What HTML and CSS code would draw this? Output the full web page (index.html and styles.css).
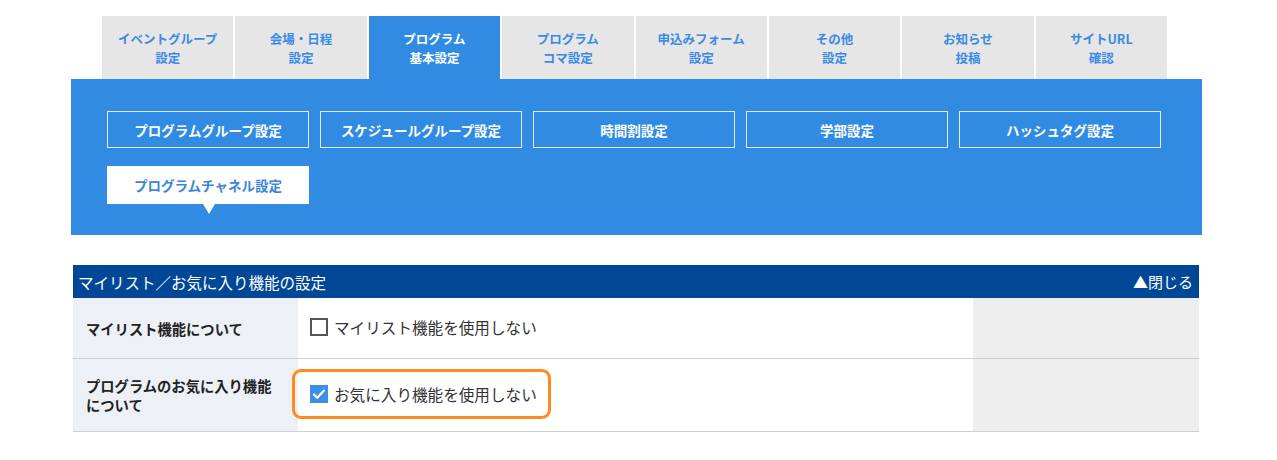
FILE: index.html
```html
<!DOCTYPE html>
<html lang="ja">
<head>
  <meta charset="UTF-8" />
  <title>プログラム基本設定</title>
  <link rel="stylesheet" href="styles.css">
</head>
<body>

  <div class="wrap">
    <nav class="tabs">
      <a class="tab">イベントグループ<br>設定</a>
      <a class="tab">会場・日程<br>設定</a>
      <a class="tab active">プログラム<br>基本設定</a>
      <a class="tab">プログラム<br>コマ設定</a>
      <a class="tab">申込みフォーム<br>設定</a>
      <a class="tab">その他<br>設定</a>
      <a class="tab">お知らせ<br>投稿</a>
      <a class="tab">サイトURL<br>確認</a>
    </nav>

    <div class="panel">
      <a class="sub">プログラムグループ設定</a>
      <a class="sub">スケジュールグループ設定</a>
      <a class="sub">時間割設定</a>
      <a class="sub">学部設定</a>
      <a class="sub">ハッシュタグ設定</a>
      <a class="sub current">プログラムチャネル設定</a>
    </div>

    <section class="block">
      <div class="block-head">
        <span>マイリスト／お気に入り機能の設定</span>
        <span class="close">▲閉じる</span>
      </div>
      <table class="settings">
        <tr class="r1">
          <th>マイリスト機能について</th>
          <td class="val">
            <label class="check"><span class="box"></span>マイリスト機能を使用しない</label>
          </td>
          <td class="side"></td>
        </tr>
        <tr class="r2">
          <th>プログラムのお気に入り機能<br>について</th>
          <td class="val">
            <label class="check marked">
              <span class="box on">
                <svg width="18" height="18" viewBox="0 0 18 18"><path d="M4 9.5l3.3 3.3L14 5.6" fill="none" stroke="#fff" stroke-width="2.2" stroke-linecap="round" stroke-linejoin="round"/></svg>
              </span>お気に入り機能を使用しない
            </label>
          </td>
          <td class="side"></td>
        </tr>
      </table>
    </section>
  </div>

</body>
</html>
```

FILE: styles.css
```css
:root {
  --panel-blue: #318be3;
  --head-blue: #004796;
  --tab-grey: #e6e6e6;
  --label-bg: #edf1f7;
  --side-bg: #eeeeee;
}

body {
  margin: 0;
  font-family: "Noto Sans CJK JP", "Noto Sans", sans-serif;
  color: #222;
  background: #fff;
}

.wrap {
  width: 1131px;
  margin-left: 71px;
  padding-top: 16px;
}

/* tabs */
.tabs {
  display: grid;
  grid-template-columns: repeat(8, 1fr);
  gap: 2px;
  width: 1065px;
  margin-left: 31px;
}

.tab {
  height: 63px;
  display: flex;
  align-items: center;
  justify-content: center;
  text-align: center;
  background-color: var(--tab-grey);
  color: #3a8be4;
  font-size: 12.5px;
  font-weight: bold;
  line-height: 19px;
}

.tab.active {
  background-color: var(--panel-blue);
  color: #fff;
}

/* sub menu */
.panel {
  background-color: var(--panel-blue);
  display: flex;
  flex-wrap: wrap;
  gap: 18px 11px;
  padding: 32px 30px 31px 36px;
}

.sub {
  position: relative;
  width: 202px;
  height: 37px;
  box-sizing: border-box;
  border: 1px solid rgba(255,255,255,0.85);
  display: flex;
  align-items: center;
  justify-content: center;
  color: #fff;
  font-size: 13.5px;
  font-weight: bold;
}

.sub.current {
  height: 38px;
  background-color: #fff;
  border-color: #fff;
  color: #3a86d8;
}

.sub.current::after {
  content: "";
  position: absolute;
  left: 95px;
  top: 37px;
  border-left: 6px solid transparent;
  border-right: 6px solid transparent;
  border-top: 10px solid #fff;
}

/* settings block */
.block {
  margin: 30px 3px 0 2px;
}

.block-head {
  height: 33px;
  background-color: var(--head-blue);
  color: #fff;
  display: flex;
  align-items: center;
  justify-content: space-between;
  padding: 0 6px 0 5px;
  font-size: 15.5px;
}

.close {
  font-size: 15px;
}

.settings {
  width: 100%;
  border-collapse: collapse;
}

.settings th {
  width: 225px;
  box-sizing: border-box;
  background-color: var(--label-bg);
  text-align: left;
  font-size: 14.3px;
  font-weight: bold;
  line-height: 19px;
  padding: 0 10px 0 13px;
  color: #222;
}

.settings td,
.settings th {
  border-bottom: 1px solid #cfcfcf;
}

.settings .val {
  width: 675px;
  box-sizing: border-box;
  padding: 0 12px;
}

.settings .side {
  background-color: var(--side-bg);
}

.r1 th, .r1 td { height: 58px; }
.r2 th, .r2 td { height: 70px; }

.check {
  position: relative;
  display: inline-flex;
  align-items: center;
  gap: 6px;
  font-size: 15.6px;
  color: #333;
}

.box {
  width: 18px;
  height: 18px;
  box-sizing: border-box;
  border: 2px solid #555;
  background: #fff;
  display: inline-block;
}

.box.on {
  border: none;
  background-color: #3d8ee6;
}

.box svg { display: block; }

.check.marked::after {
  content: "";
  position: absolute;
  top: -14px;
  bottom: -14px;
  left: -18px;
  right: -14px;
  border: 3px solid #ff8a1f;
  border-radius: 9px;
}
```
